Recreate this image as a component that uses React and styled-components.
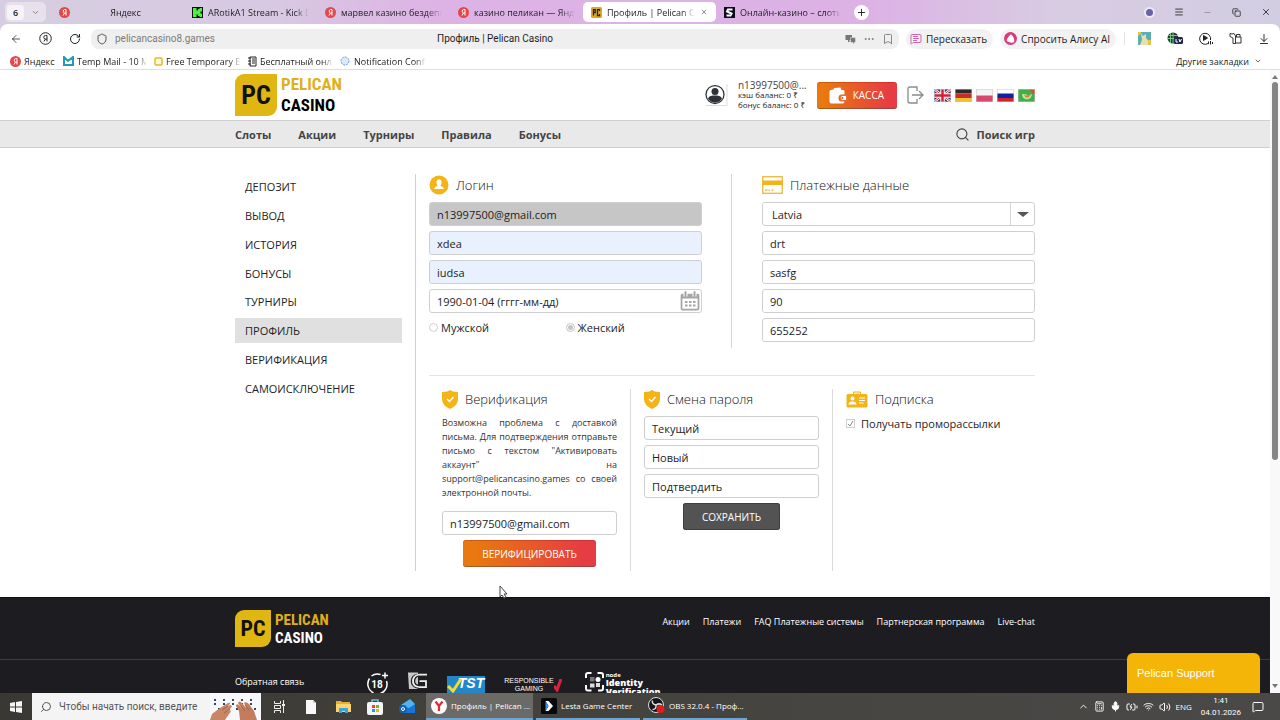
import React from "react";
import styled, { createGlobalStyle, css } from "styled-components";
import {
  ArrowLeft,
  BatteryCharging,
  Bookmark,
  Calculator,
  ChevronDown,
  ChevronUp,
  Copy,
  ArrowDownToLine,
  Ellipsis,
  Menu,
  MessageSquare,
  MessageSquareText,
  Mic,
  Minus,
  Plus,
  RotateCw,
  Search,
  Shield,
  Volume2,
  Wifi,
  X,
} from "lucide-react";

const GlobalStyle = createGlobalStyle`
  * {
    box-sizing: border-box;
  }

  body {
    margin: 0;
    font-family: "Open Sans", "Noto Sans", sans-serif;
    font-size: 11px;
    color: #1d1d1f;
    background: #fff;
  }

  a {
    color: inherit;
    text-decoration: none;
  }

  button,
  input,
  select {
    font: inherit;
    color: inherit;
  }

  button {
    border: none;
    padding: 0;
    background: none;
    cursor: pointer;
  }

  ul {
    list-style: none;
    margin: 0;
    padding: 0;
  }

  svg {
    display: block;
    flex: none;
  }
`;

const Screen = styled.div`
  height: 100vh;
  display: flex;
  flex-direction: column;
  overflow: hidden;
`;

/* ---------- browser ---------- */

const Browser = styled.header`
  flex: none;
  background: linear-gradient(90deg, #d6cee0 0%, #d8c8e2 22%, #ddb3e5 34%, #dcb2e5 68%, #d8cbe2 82%, #d2cee2 100%);
  border-bottom: 1px solid #dedede;
`;

const TabStrip = styled.div`
  height: 24px;
  display: flex;
  align-items: center;
  padding: 0 9px 0 5px;
`;

const TabCounter = styled.button`
  height: 20px;
  width: 41px;
  margin-right: 5px;
  display: flex;
  align-items: center;
  gap: 7px;
  padding: 0 4px 0 2px;
  border-radius: 5px;
  background: #e6e1ec;
  font-size: 9px;
  font-weight: 600;

  span {
    width: 17px;
    line-height: 15px;
    border-radius: 4px;
    background: #f6f3f8;
  }
`;

const Tab = styled.a`
  flex: 0 1 133px;
  min-width: 0;
  height: 20px;
  display: flex;
  align-items: center;
  gap: 5px;
  padding: 0 8px;
  border-radius: 5px;
  font-size: 9px;
  background: ${({ $active }) => ($active ? "#fff" : "transparent")};
`;

const TabTitle = styled.span`
  flex: 1;
  min-width: 0;
  overflow: hidden;
  white-space: nowrap;
  text-align: ${({ $center }) => ($center ? "center" : "left")};
  mask-image: linear-gradient(90deg, #000 85%, transparent 100%);
`;

const NewTab = styled.button`
  width: 15px;
  height: 15px;
  margin-left: 5px;
  display: grid;
  place-items: center;
  border-radius: 50%;
  background: #fff;
`;

const WindowButtons = styled.div`
  margin-left: auto;
  display: flex;
  align-items: center;
  gap: 18px;

  button {
    width: 11px;
    display: grid;
    place-items: center;
  }
`;

const Profile = styled.span`
  width: 11px;
  height: 11px;
  border: 2px solid #eceaf4;
  border-radius: 50%;
  background: #6a62a8;
`;

const Toolbar = styled.div`
  height: 29px;
  display: flex;
  align-items: center;
  gap: 7px;
  padding: 0 10px;
  background: #fff;
  border-radius: 8px 8px 0 0;
  font-size: 10px;
`;

const NavButtons = styled.div`
  display: flex;
  align-items: center;
  gap: 17px;
  margin-right: 3px;
`;

const Address = styled.div`
  flex: 1;
  min-width: 0;
  height: 20px;
  display: flex;
  align-items: center;
  padding: 0 5px;
  border-radius: 8px;
  background: #efefef;
  font-family: Roboto, "Open Sans", sans-serif;
`;

const AddressSide = styled.div`
  flex: 1;
  display: flex;
  align-items: center;
  justify-content: ${({ $end }) => ($end ? "flex-end" : "flex-start")};
  gap: 7px;
  color: #7b7b7b;
`;

const Chip = styled.button`
  height: 20px;
  display: flex;
  align-items: center;
  gap: 4px;
  padding: 0 6px 0 4px;
  border-radius: 10px;
  background: #f3f2f3;
`;

const Extensions = styled.div`
  display: flex;
  align-items: center;
  gap: 16px;
  margin-left: 1px;
  padding-left: 13px;
  border-left: 1px solid #e4e4e4;
`;

const Bookmarks = styled.nav`
  height: 16px;
  display: flex;
  align-items: center;
  gap: 7px;
  padding: 0 18px 0 10px;
  background: #fff;
  font-size: 9px;

  button {
    margin-left: auto;
    display: flex;
    align-items: center;
    gap: 5px;
  }
`;

const BookmarkLink = styled.a`
  flex: 0 1 ${({ $width }) => $width}px;
  min-width: 0;
  display: flex;
  align-items: center;
  gap: 3px;
`;

/* ---------- site ---------- */

const Viewport = styled.div`
  flex: 1;
  min-height: 0;
  display: flex;
  position: relative;
`;

const Site = styled.div`
  flex: 1;
  min-width: 0;
  overflow: hidden;
`;

const Container = styled.div`
  width: 100%;
  max-width: 800px;
  margin: 0 auto;
  display: flex;
  align-items: center;
`;

const SiteHeader = styled(Container)`
  height: 50px;
`;

const Logo = styled.a`
  display: flex;
  align-items: center;
  gap: 4px;
  font-family: "Liberation Sans Narrow", "Roboto Condensed", "Liberation Sans", sans-serif;
  font-weight: 700;
  font-size: ${({ $small }) => ($small ? 15 : 17)}px;
  line-height: ${({ $small }) => ($small ? 18 : 21)}px;
`;

const LogoMark = styled.span`
  width: ${({ $small }) => ($small ? 36 : 42)}px;
  line-height: ${({ $small }) => ($small ? 37 : 42)}px;
  border-radius: 9px 0;
  background: #e0b613;
  color: #111;
  text-align: center;
  font-size: ${({ $small }) => ($small ? 22 : 26)}px;
`;

const LogoText = styled.span`
  display: flex;
  flex-direction: column;
  color: ${({ $light }) => ($light ? "#fff" : "#000")};

  span {
    color: #e0b01a;
  }
`;

const Account = styled.div`
  margin-left: auto;
  display: flex;
  align-items: center;
  gap: 10px;
`;

const Balance = styled.div`
  min-width: 68px;
  font-size: 8px;
  line-height: 10px;
  white-space: nowrap;

  div:first-child {
    font-size: 10px;
    color: #444;
  }
`;

const Button = styled.button`
  height: 27px;
  display: inline-flex;
  align-items: center;
  justify-content: center;
  gap: 7px;
  padding: 0 19px;
  border-radius: 3px;
  color: #fff;
  font-size: 10px;
  white-space: nowrap;
  background: linear-gradient(90deg, #e8780f 10%, #e63c43 90%);
  box-shadow: inset 0 -1px 0 rgba(80, 60, 60, 0.45), inset 0 1px 0 rgba(160, 20, 20, 0.3);

  ${({ $dark }) =>
    $dark &&
    css`
      background: #545354;
      box-shadow: inset 0 0 0 1px #3f3f3f;
    `}
`;

const CashButton = styled(Button)`
  padding: 0 13px 0 12px;
  gap: 6px;
`;

const Flags = styled.div`
  display: flex;
  gap: 4px;
`;

const SiteNav = styled.nav`
  height: 28px;
  display: flex;
  border-top: 1px solid #cfcfcf;
  border-bottom: 1px solid #cfcfcf;
  background: #e9e9e9;
  color: #444;
  font-weight: 700;
`;

const NavInner = styled(Container)`
  gap: 27px;
`;

const SearchLink = styled.a`
  margin-left: auto;
  display: flex;
  align-items: center;
  gap: 7px;
`;

const Main = styled(Container)`
  align-items: stretch;
  gap: 13px;
  padding: 26px 0;
`;

const SideMenu = styled.ul`
  width: 167px;
  height: 227px;
  display: flex;
  flex-direction: column;
  justify-content: space-between;
`;

const SideLink = styled.a`
  display: block;
  padding: 0 10px;
  line-height: 25px;
  background: ${({ $active }) => ($active ? "#e0e0e0" : "transparent")};
`;

const Content = styled.main`
  flex: 1;
  min-width: 0;
  padding-left: 13px;
  border-left: 1px solid #cfcfcf;
`;

const TopForms = styled.div`
  display: grid;
  grid-template-columns: 1fr 1fr;
  padding-bottom: 27px;
  border-bottom: 1px solid #e2e2e2;
`;

const TopPanel = styled.section`
  padding-top: 1px;

  &:first-child {
    padding-right: 29px;
    border-right: 1px solid #d3d3d3;
  }

  &:last-child {
    padding-left: 30px;
    padding-bottom: 6px;
  }
`;

const BottomForms = styled.div`
  display: grid;
  grid-template-columns: repeat(3, 1fr);
  margin-top: 13px;
`;

const BottomPanel = styled.section`
  min-height: 182px;
  padding: 0 13px 4px;
  border-right: 1px solid #dadada;

  &:last-child {
    padding-right: 0;
    border-right: none;
  }
`;

const Heading = styled.h2`
  height: 20px;
  margin: 0 0 7px;
  display: flex;
  align-items: center;
  gap: 7px;
  font-size: 13px;
  font-weight: 300;
  color: #111;
`;

const Fields = styled.div`
  display: flex;
  flex-direction: column;
  gap: 5px;
`;

const fieldBox = css`
  width: 100%;
  height: 24px;
  padding: 0 7px;
  border: 1px solid #cfcfd2;
  border-radius: 3px;
  background: #fff;
  outline: none;
`;

const Field = styled.input`
  ${fieldBox}
  background: ${({ $tone }) => $tone || "#fff"};

  &::placeholder {
    color: #1d1d1f;
    opacity: 1;
  }
`;

const FieldWrap = styled.div`
  position: relative;

  svg {
    position: absolute;
    right: 2px;
    top: 2px;
    pointer-events: none;
  }
`;

const Country = styled.select`
  ${fieldBox}
  padding: 0 9px;
  appearance: none;
`;

const Arrow = styled.span`
  position: absolute;
  right: 1px;
  top: 1px;
  bottom: 1px;
  width: 24px;
  display: grid;
  place-items: center;
  border-left: 1px solid #d6d6d6;
  pointer-events: none;

  &::after {
    content: "";
    border: 6px solid transparent;
    border-top: 5px solid #555;
    border-bottom: 0;
  }
`;

const Genders = styled.div`
  margin-top: 7px;
  display: grid;
  grid-template-columns: 1fr 1fr;
`;

const Choice = styled.label`
  display: flex;
  align-items: center;
  gap: ${({ $wide }) => ($wide ? 6 : 3)}px;
  line-height: 15px;
  white-space: nowrap;

  input {
    appearance: none;
    flex: none;
    width: 9px;
    height: 9px;
    margin: 0;
    border: 1px solid #cfcfcf;
    background: #fff;
  }

  input[type="radio"] {
    border-radius: 50%;
  }

  input[type="radio"]:checked {
    background: #c4c4c4;
    box-shadow: inset 0 0 0 1px #fff;
  }
`;

const Tick = styled.span`
  position: relative;
  display: flex;

  svg {
    position: absolute;
    inset: 0;
    pointer-events: none;
  }

  input:not(:checked) + svg {
    display: none;
  }
`;

const Note = styled.p`
  margin: 0 0 11px;
  font-size: 9px;
  line-height: 14px;
  text-align: justify;
  color: #333;
`;

const Actions = styled.div`
  margin-top: 5px;
  display: flex;
  justify-content: center;
`;

const Footer = styled.footer`
  background: #1d1c20;
  border-top: 1px solid #111;
  color: #fff;
  font-size: 9px;
`;

const FooterTop = styled.div`
  border-bottom: 1px solid #3b3a3e;
  padding: 12px 0;
`;

const FooterLinks = styled.nav`
  align-self: flex-start;
  margin-left: auto;
  display: flex;
  gap: 13px;
  line-height: 24px;
`;

const FooterBottom = styled(Container)`
  padding: 12px 0 40px;
  align-items: flex-start;
  line-height: 20px;
`;

const Badges = styled.div`
  margin-left: 62px;
  display: flex;
  gap: 19px;
  align-items: flex-start;
`;

const Tst = styled.span`
  width: 38px;
  margin-top: 4px;
  display: flex;
  flex-direction: column;
  align-items: flex-end;
  padding: 0 1px;
  background: #2386c8;
  font: italic 700 14px/15px "Liberation Sans", sans-serif;
  position: relative;

  small {
    font: 6px/8px "Liberation Sans", sans-serif;
    color: #a5dcff;
  }

  svg {
    position: absolute;
    left: 0;
    top: 2px;
  }
`;

const Responsible = styled.span`
  display: flex;
  align-items: center;
  margin-top: 5px;
  font: 7px/8px "Liberation Sans", sans-serif;
  text-align: center;

  small {
    display: block;
    font-size: 7px;
    line-height: 8px;
  }
`;

const Identity = styled.span`
  display: flex;
  gap: 2px;
  margin-left: 4px;
  font-weight: 700;
  line-height: 9px;

  small {
    display: block;
    font-size: 6px;
    line-height: 6px;
  }

  b {
    display: block;
  }
`;

const ScrollTrack = styled.div`
  width: 10px;
  flex: none;
  display: flex;
  flex-direction: column;
  align-items: center;
  padding: 4px 0;
  background: #f9f9f9;
`;

const Thumb = styled.div`
  flex: 0 1 378px;
  width: 6px;
  margin: 3px 0 auto;
  border-radius: 3px;
  background: #858585;
`;

const Support = styled.button`
  position: absolute;
  right: 20px;
  bottom: 0;
  width: 133px;
  height: 40px;
  padding: 0 10px;
  border-radius: 6px 6px 0 0;
  background: #f4b408;
  color: #fff;
  font-family: "Liberation Sans", sans-serif;
  font-size: 11px;
  text-align: left;
`;

const Pointer = styled.svg`
  position: absolute;
  left: 499px;
  top: 515px;
`;

/* ---------- taskbar ---------- */

const Taskbar = styled.div`
  flex: none;
  height: 27px;
  display: flex;
  align-items: stretch;
  background: linear-gradient(90deg, #393833, #45433e 50%, #4b4948);
  color: #fff;
  font-size: 8px;
`;

const Start = styled.button`
  width: 32px;
  display: grid;
  place-items: center;
`;

const TaskSearch = styled.label`
  width: 229px;
  display: flex;
  align-items: center;
  gap: 7px;
  padding-left: 8px;
  background: #f4f4f4;
  color: #444;
  font-size: 10px;
  font-family: Roboto, "Open Sans", sans-serif;

  input {
    flex: 1;
    min-width: 0;
    padding: 0;
    border: none;
    background: none;
    outline: none;
  }

  input::placeholder {
    color: #555;
    opacity: 1;
  }
`;

const SearchGlyph = styled(Search)`
  transform: scaleX(-1);
`;

const Pinned = styled.div`
  display: flex;
  align-items: center;
  gap: 16px;
  padding: 0 11px 0 10px;

  button {
    width: 16px;
    display: grid;
    place-items: center;
  }
`;

const Task = styled.button`
  flex: 0 1 ${({ $active }) => ($active ? 107 : 104)}px;
  min-width: 0;
  margin-right: 3px;
  display: flex;
  align-items: center;
  gap: 4px;
  padding: 0 5px;
  border-bottom: 2px solid #6fa5d2;
  background: ${({ $active }) => ($active ? "#6c6a67" : "transparent")};
  white-space: nowrap;
`;

const Tray = styled.div`
  margin-left: auto;
  display: flex;
  align-items: center;
  gap: 5px;
  padding-right: 16px;
`;

const Clock = styled.div`
  margin: 0 6px 0 4px;
  font-family: Roboto, "Open Sans", sans-serif;
  line-height: 12px;
  text-align: center;
`;

/* ---------- icons ---------- */

const YandexIcon = ({ size = 11 }) => (
  <svg width={size} height={size} viewBox="0 0 22 22" aria-hidden="true">
    <circle cx="11" cy="11" r="11" fill="#e34848" />
    <path d="M14 17V5h-2.600a3.600 3.600 0 0 0-.4 7H14m-3 0-3 5" fill="none" stroke="#fff" strokeWidth="2" />
  </svg>
);

const KickIcon = () => (
  <svg width="11" height="11" viewBox="0 0 22 22" aria-hidden="true">
    <path d="M0 0h22v22H0z" fill="#111" />
    <path d="M2 2h7v5h3V4h3V2h5v7h-3v4h3v7h-5v-2h-3v-3H9v5H2z" fill="#4cf23d" />
  </svg>
);

const PelicanIcon = () => (
  <svg width="11" height="11" viewBox="0 0 22 22" aria-hidden="true">
    <rect width="22" height="22" rx="3" fill="#dca91c" />
    <path d="M5 17V5h3.500v6H5M17 8V5h-4v12h4v-3" fill="none" stroke="#222" strokeWidth="2.500" />
  </svg>
);

const SlotIcon = () => (
  <svg width="11" height="11" viewBox="0 0 22 22" aria-hidden="true">
    <path d="M0 0h22v22H0z" fill="#0b0b1c" />
    <path d="M17 5H8L6 9l9 4-2 4H5" fill="none" stroke="#fff" strokeWidth="4" />
  </svg>
);

const AvatarIcon = () => (
  <svg width="24" height="24" viewBox="0 0 48 48" aria-hidden="true">
    <path d="M46 2v43H4" fill="none" stroke="#ddd" strokeWidth="2" />
    <circle cx="22" cy="23" r="18" fill="#fff" stroke="#2d3138" strokeWidth="2.500" />
    <circle cx="22" cy="17" r="7" fill="#2d3138" />
    <path d="M8 31c3-6 8-6 14-6s11 0 14 6a16 16 0 0 1-28 0z" fill="#2d3138" />
  </svg>
);

const WalletIcon = () => (
  <svg width="18" height="17" viewBox="0 0 36 34" aria-hidden="true">
    <path d="M1 9q0-3 3-3l5-1 1-3 13-1 2 5h4q2 0 2 3v6h-6q-6 0-6 7t6 7h6q0 4-4 4H5q-4 0-4-4z" fill="#fff" />
    <path d="M25 17h10v10H25q-4-5 0-10z" fill="#fff" stroke="#e45a25" strokeWidth="1.500" />
    <circle cx="27" cy="22" r="2" fill="#e45a25" />
  </svg>
);

const LogoutIcon = () => (
  <svg width="17" height="18" viewBox="0 0 17 18" fill="none" stroke="#8b8b8b" strokeWidth="1.300" aria-hidden="true">
    <path d="M10 5V1H3Q1 1 1 3v12q0 2 2 2h7v-4M5 9h11M12 5l4 4-4 4" />
  </svg>
);

const UserIcon = () => (
  <svg width="20" height="20" viewBox="0 0 40 40" aria-hidden="true">
    <circle cx="20" cy="20" r="19" fill="#f2b416" />
    <ellipse cx="20" cy="15" rx="5" ry="6.500" fill="#fff" />
    <path d="M10 28q1-5 7-6v-3h6v3q6 1 7 6z" fill="#fff" />
  </svg>
);

const CardIcon = () => (
  <svg width="21" height="18" viewBox="0 0 42 36" aria-hidden="true">
    <rect x="1.500" y="1.500" width="39" height="33" fill="#fff" stroke="#e9b335" strokeWidth="2.500" />
    <path d="M1 9h40v9H1z" fill="#f2b416" />
    <path d="M6 28h5m2 0h3m3 0h4" stroke="#f2b416" strokeWidth="2.500" />
  </svg>
);

const ShieldIcon = () => (
  <svg width="16" height="19" viewBox="0 0 32 38" aria-hidden="true">
    <path d="M16 0q6 5 16 4v14q0 13-16 20Q0 31 0 18V4q10 1 16-4z" fill="#f2b416" />
    <path d="m10 18 5 5 8-9" fill="none" stroke="#fff" strokeWidth="3" />
  </svg>
);

const BadgeIcon = () => (
  <svg width="22" height="17" viewBox="0 0 44 34" aria-hidden="true">
    <path d="M4 6h10V3q0-2 2-2h12q2 0 2 2v3h10q3 0 3 3v21q0 3-3 3H4q-3 0-3-3V9q0-3 3-3z" fill="#f2b416" />
    <path d="M17 6V4h10v2M26 14h12M26 19h12M26 24h9" stroke="#fff" strokeWidth="2" fill="none" />
    <circle cx="13" cy="15" r="4" fill="#fff" />
    <path d="M5 27q0-6 8-6t8 6z" fill="#fff" />
  </svg>
);

const CalendarIcon = () => (
  <svg width="20" height="20" viewBox="0 0 40 40" aria-hidden="true">
    <rect x="3" y="7" width="34" height="30" rx="2" fill="#fff" stroke="#a5a5a5" strokeWidth="3.500" />
    <path d="M3 7h34v8H3z" fill="#a5a5a5" />
    <path d="M11 0v11M29 0v11" stroke="#fff" strokeWidth="8" />
    <path d="M11 2v8M29 2v8" stroke="#a5a5a5" strokeWidth="4" strokeLinecap="round" />
    <path d="M10 22h21M10 29h21" stroke="#a5a5a5" strokeWidth="4" strokeDasharray="5 3" />
  </svg>
);

const Flag = ({ code }) => (
  <svg width="17" height="13" viewBox="0 0 34 26" role="img" aria-label={code}>
    {code === "en" && (
      <>
        <path d="M0 0h34v26H0z" fill="#263c7c" />
        <path d="m0 0 34 26M34 0 0 26" stroke="#fff" strokeWidth="5" />
        <path d="m0 0 34 26M34 0 0 26" stroke="#cf3344" strokeWidth="2" />
        <path d="M17 0v26M0 13h34" stroke="#fff" strokeWidth="9" />
        <path d="M17 0v26M0 13h34" stroke="#cf2338" strokeWidth="5" />
      </>
    )}
    {code === "de" && (
      <>
        <path d="M0 0h34v9H0z" fill="#2c2b2b" />
        <path d="M0 9h34v9H0z" fill="#cc2b2b" />
        <path d="M0 18h34v8H0z" fill="#edc12d" />
      </>
    )}
    {code === "pl" && (
      <>
        <path d="M0 0h34v13H0z" fill="#f5f2f4" />
        <path d="M0 13h34v13H0z" fill="#d8486b" />
      </>
    )}
    {code === "ru" && (
      <>
        <path d="M0 0h34v9H0z" fill="#fff" />
        <path d="M0 9h34v9H0z" fill="#10239e" />
        <path d="M0 18h34v8H0z" fill="#cc2233" />
      </>
    )}
    {code === "pt" && (
      <>
        <path d="M0 0h34v26H0z" fill="#42ad4b" />
        <path d="M22 0h12v13z" fill="#e0492e" />
        <path d="M8 10q0 10 10 11 9-1 10-11l-8 4-4-4z" fill="#bde392" />
        <path d="M13 10q6 7 12-1-1 8-7 8-5 0-5-7z" fill="#e37a46" />
      </>
    )}
    <rect x=".5" y=".5" width="33" height="25" fill="none" stroke="#c9c5c9" />
  </svg>
);

const AgeBadge = () => (
  <svg width="23" height="24" viewBox="0 0 46 48" aria-label="18+">
    <path d="M29 5a20 20 0 0 0-18 3M7 13a20 20 0 0 0 8 29M26 44a20 20 0 0 0 15-26" fill="none" stroke="#fff" strokeWidth="3" />
    <path d="M38 1v12M32 7h12" stroke="#fff" strokeWidth="3" />
    <text x="22" y="31" textAnchor="middle" fill="#fff" fontFamily="Roboto, sans-serif" fontWeight="700" fontSize="20">18</text>
  </svg>
);

const GBadge = () => (
  <svg width="20" height="18" viewBox="0 0 40 36" aria-hidden="true">
    <path d="M0 1h20v33H2z" fill="#c8c7ca" />
    <path d="M38 5H20Q7 7 7 18t13 14h16V17H22M36 8H21q-8 2-8 10t8 9h9" fill="none" stroke="#222" strokeWidth="3" />
    <path d="M38 5H22q-12 2-12 13t12 12h14V18H23" fill="none" stroke="#eee" strokeWidth="3.500" />
  </svg>
);

const FaceFrame = () => (
  <svg width="19" height="20" viewBox="0 0 38 40" aria-hidden="true">
    <path d="M2 12V6q0-4 4-4h7M25 2h7q4 0 4 4v6M2 26v7q0 4 4 4h7M36 26v7q0 4-4 4h-6" fill="none" stroke="#fff" strokeWidth="4" />
    <path d="M10 10h9v9h-9z" fill="#777" />
    <circle cx="26" cy="15" r="5" fill="#fff" />
    <path d="M10 23h9v8h-9zM22 22h8v8h-8z" fill="#ddd" />
  </svg>
);

const HandsPicture = () => (
  <svg width="51" height="27" viewBox="0 0 51 27" aria-hidden="true">
    <path d="M0 0h51v27H0z" fill="#f7f8fb" />
    <path d="M4 7h44M4 11h44M8 16h40" stroke="#31456e" strokeWidth="2" strokeDasharray="2 7" />
    <path d="m0 27 2-6 8-6 8-5q3-1 2 1l-4 4 4-3q3 0 1 3l-4 3 3-1q2 1-1 4l-4 6z" fill="#c98564" />
    <path d="m30 27-1-9-3-5q0-3 3-1l4 5-5-7q1-3 4 0l5 6-3-6q2-2 5 1l5 7 3 9z" fill="#c37c5c" />
    <path d="m12 17 6-4M14 20l6-4M31 13l4 5M35 12l4 5" stroke="#a3644a" />
  </svg>
);

const WindowsIcon = () => (
  <svg width="12" height="12" viewBox="0 0 12 12" fill="#f6f6f6" aria-hidden="true">
    <path d="m0 2 5-1v4.600H0zM6 1l6-1v5.600H6zM0 6.500h5V11l-5-1zM6 6.500h6V12l-6-1z" />
  </svg>
);

const TaskViewIcon = () => (
  <svg width="13" height="13" viewBox="0 0 13 13" fill="none" stroke="#eee" aria-hidden="true">
    <path d="M1.500 1v2.500h6V1M1.500 5.500h6v3h-6zM1.500 13v-2.500h6V13M10.500 0v13" />
    <path d="M9 4h3v2H9z" fill="#eee" stroke="none" />
  </svg>
);

const FileIcon = () => (
  <svg width="12" height="14" viewBox="0 0 12 14" aria-hidden="true">
    <path d="M1 0h7l3 3v11H1z" fill="#f8f8f8" />
    <path d="M8 0v3h3" fill="#ccc" />
  </svg>
);

const FolderIcon = () => (
  <svg width="15" height="13" viewBox="0 0 15 13" aria-hidden="true">
    <path d="M0 1h5l1 1h8v4H0z" fill="#e9ad35" />
    <path d="M0 4h15v8H0z" fill="#f9d570" />
    <path d="M3 13V8h9v5h-3v-2H6v2z" fill="#3da5d8" />
  </svg>
);

const StoreIcon = () => (
  <svg width="16" height="16" viewBox="0 0 16 16" aria-hidden="true">
    <path d="M5 4V1h6v3" fill="none" stroke="#63c1e8" strokeWidth="1.500" />
    <rect y="3" width="16" height="13" rx="2" fill="#f4f5f5" />
    <path d="M5 6h3v3H5z" fill="#e5472d" />
    <path d="M9 6h3v3H9z" fill="#74b530" />
    <path d="M5 10h3v3H5z" fill="#209de0" />
    <path d="M9 10h3v3H9z" fill="#eeb321" />
  </svg>
);

const MailIcon = () => (
  <svg width="16" height="15" viewBox="0 0 16 15" aria-hidden="true">
    <path d="m2 6 9-6 5 5v8H4z" fill="#50b4f4" />
    <path d="m2 6 8 3 6-4v9H2z" fill="#1675d6" />
    <circle cx="4" cy="10" r="4" fill="#1260b5" />
    <circle cx="4" cy="10" r="1.500" fill="none" stroke="#fff" />
  </svg>
);

const YBrowserIcon = () => (
  <svg width="16" height="16" viewBox="0 0 32 32" aria-hidden="true">
    <circle cx="16" cy="16" r="16" fill="#fff" />
    <path d="m9 7 7 9 7-9M16 15v11" fill="none" stroke="#e52b32" strokeWidth="4.500" />
  </svg>
);

const LestaIcon = () => (
  <svg width="16" height="16" viewBox="0 0 32 32" aria-hidden="true">
    <rect width="32" height="32" rx="3" fill="#08090c" />
    <path d="M9 6h6l9 10-9 10H9l6-10z" fill="#fff" />
    <path d="m9 6 6 10-6 10" fill="#3f8cea" />
  </svg>
);

const ObsIcon = () => (
  <svg width="17" height="17" viewBox="0 0 34 34" aria-hidden="true">
    <circle cx="16" cy="16" r="15" fill="#17161a" stroke="#ddd" strokeWidth="2" />
    <path d="M16 16q-9-2-7-9M16 16q8-5 12 1M16 16q1 9-7 9" fill="none" stroke="#ddd" strokeWidth="3" />
    <circle cx="25" cy="24" r="8" fill="#e01e1e" />
  </svg>
);

/* ---------- data ---------- */

const tabs = [
  { title: "Яндекс", icon: <YandexIcon />, center: true },
  { title: "ARotikA1 Stream - Kick Da", icon: <KickIcon /> },
  { title: "марвел казино бездепоз", icon: <YandexIcon /> },
  { title: "казино пеликан — Яндекс", icon: <YandexIcon /> },
  { title: "Профиль | Pelican Casin", icon: <PelicanIcon />, active: true },
  { title: "Онлайн-казино – слоты, с", icon: <SlotIcon /> },
];

const menu = ["Депозит", "Вывод", "История", "Бонусы", "Турниры", "Профиль", "Верификация", "Самоисключение"];

const App = () => {
  return (
    <>
      <GlobalStyle />
      <Screen>
        <Browser>
          <TabStrip>
            <TabCounter aria-label="Вкладки">
              <span>6</span>
              <ChevronDown size={9} color="#666" />
            </TabCounter>
            {tabs.map((tab) => (
              <Tab href="#" key={tab.title} $active={tab.active}>
                {tab.icon}
                <TabTitle $center={tab.center}>{tab.title}</TabTitle>
                {tab.active && <X size={8} color="#555" />}
              </Tab>
            ))}
            <NewTab aria-label="Новая вкладка">
              <Plus size={11} />
            </NewTab>
            <WindowButtons>
              <Profile />
              <button aria-label="Меню"><Menu size={10} /></button>
              <button aria-label="Свернуть"><Minus size={9} color="#888" /></button>
              <button aria-label="Развернуть"><Copy size={9} /></button>
              <button aria-label="Закрыть"><X size={10} /></button>
            </WindowButtons>
          </TabStrip>
          <Toolbar>
            <NavButtons>
              <button aria-label="Назад"><ArrowLeft size={12} strokeWidth={1.5} /></button>
              <button aria-label="Главная">
                <svg width="13" height="13" viewBox="0 0 26 26" fill="none" stroke="#222" strokeWidth="2">
                  <circle cx="13" cy="13" r="11.500" />
                  <path d="M16 19V7h-3a3 3 0 0 0 0 7h3m-3 0-3 5" />
                </svg>
              </button>
              <button aria-label="Обновить"><RotateCw size={12} strokeWidth={2} /></button>
            </NavButtons>
            <Address>
              <AddressSide>
                <Shield size={12} strokeWidth={1.8} color="#444" />
                <span>pelicancasino8.games</span>
              </AddressSide>
              <span>Профиль | Pelican Casino</span>
              <AddressSide $end>
                <svg width="11" height="10" viewBox="0 0 22 20" fill="#777" aria-hidden="true">
                  <path d="M1 2h13v10H9v4H6v-4H1z" />
                  <path d="M11 7h10v10h-3v3h-2v-3h-5z" stroke="#efefef" />
                </svg>
                <Ellipsis size={12} />
                <Bookmark size={12} strokeWidth={1.8} />
              </AddressSide>
            </Address>
            <Chip>
              <MessageSquareText size={12} color="#c957a9" strokeWidth={1.8} />
              Пересказать
            </Chip>
            <Chip>
              <svg width="13" height="13" viewBox="0 0 26 26" aria-hidden="true">
                <circle cx="13" cy="13" r="13" fill="#d93a78" />
                <path d="M13 5q4 0 7 9t-7 7-7-7 7-9z" fill="#fff" />
              </svg>
              Спросить Алису AI
            </Chip>
            <Extensions>
              <svg width="13" height="13" viewBox="0 0 13 13" aria-hidden="true">
                <path d="M0 0h13v13H0z" fill="#5aafb3" />
                <path d="m3 1 2 3 3-2v4q3 2 2 7H2l2-5z" fill="#e9dfae" />
                <path d="M0 0h3v2L0 4zM10 8h3v5h-3z" fill="#e2c54e" />
              </svg>
              <svg width="16" height="13" viewBox="0 0 32 26" aria-hidden="true">
                <circle cx="12" cy="12" r="11" fill="#243b35" />
                <path d="M3 7h19M1 13h21M12 1v22M7 2v20" stroke="#76c783" strokeWidth="2" />
                <rect x="14" y="10" width="18" height="14" rx="3" fill="#23264b" />
                <path d="M18 14v6h4M24 14l2 6 3-6" stroke="#fff" strokeWidth="2" fill="none" />
              </svg>
              <svg width="14" height="13" viewBox="0 0 28 26" fill="none" stroke="#222" strokeWidth="2" aria-hidden="true">
                <path d="M18 23a11 11 0 1 1 5-7M19 19v5M23 18v7M27 20v4" />
                <path d="m9 7 8 5-8 5z" fill="#222" />
              </svg>
              <svg width="13" height="13" viewBox="0 0 26 26" fill="none" stroke="#333" strokeWidth="2" aria-hidden="true">
                <path d="M2 3q4 2 8 0l3 5v15H8V12L2 9zM13 10h11v12H13M15 10V5h7v5" />
              </svg>
              <ArrowDownToLine size={12} strokeWidth={1.8} />
            </Extensions>
          </Toolbar>
          <Bookmarks>
            <BookmarkLink href="#" $width={46}>
              <YandexIcon />
              <span>Яндекс</span>
            </BookmarkLink>
            <BookmarkLink href="#" $width={84}>
              <svg width="11" height="10" viewBox="0 0 11 10" fill="none" stroke="#2599b8" strokeWidth="2" aria-hidden="true">
                <path d="M1 8V1l4 4 5-4v7M0 9h11" />
              </svg>
              <TabTitle>Temp Mail - 10 Min</TabTitle>
            </BookmarkLink>
            <BookmarkLink href="#" $width={87}>
              <svg width="9" height="9" viewBox="0 0 9 9" aria-hidden="true">
                <rect x="1" y="1" width="7" height="7" rx="1" fill="#fff9db" stroke="#e7b928" strokeWidth="1.500" />
              </svg>
              <TabTitle>Free Temporary Er</TabTitle>
            </BookmarkLink>
            <BookmarkLink href="#" $width={85}>
              <svg width="9" height="11" viewBox="0 0 9 11" fill="none" stroke="#222" aria-hidden="true">
                <path d="M2 1h6v9H2zM0 2h3M0 5h3M0 8h3M4 3h3M4 5h3M4 7h3" />
              </svg>
              <TabTitle>Бесплатный онла</TabTitle>
            </BookmarkLink>
            <BookmarkLink href="#" $width={86}>
              <svg width="11" height="10" viewBox="0 0 11 10" aria-hidden="true">
                <circle cx="5" cy="5" r="4" fill="#dceaff" stroke="#7197dc" strokeDasharray="2 1" />
              </svg>
              <TabTitle>Notification Confir</TabTitle>
            </BookmarkLink>
            <button>
              Другие закладки
              <ChevronDown size={8} />
            </button>
          </Bookmarks>
        </Browser>

        <Viewport>
          <Site>
            <SiteHeader>
              <Logo href="#">
                <LogoMark>PC</LogoMark>
                <LogoText>
                  <span>PELICAN</span>
                  CASINO
                </LogoText>
              </Logo>
              <Account>
                <AvatarIcon />
                <Balance>
                  <div>n13997500@...</div>
                  <div>кэш баланс: 0 ₹</div>
                  <div>бонус баланс: 0 ₹</div>
                </Balance>
                <CashButton>
                  <WalletIcon />
                  КАССА
                </CashButton>
                <button aria-label="Выйти"><LogoutIcon /></button>
                <Flags>
                  {["en", "de", "pl", "ru", "pt"].map((code) => (
                    <Flag key={code} code={code} />
                  ))}
                </Flags>
              </Account>
            </SiteHeader>

            <SiteNav>
              <NavInner>
                <a href="#">Слоты</a>
                <a href="#">Акции</a>
                <a href="#">Турниры</a>
                <a href="#">Правила</a>
                <a href="#">Бонусы</a>
                <SearchLink href="#">
                  <Search size={15} strokeWidth={1.8} />
                  Поиск игр
                </SearchLink>
              </NavInner>
            </SiteNav>

            <Main>
              <SideMenu>
                {menu.map((item) => (
                  <li key={item}>
                    <SideLink href="#" $active={item === "Профиль"}>{item.toUpperCase()}</SideLink>
                  </li>
                ))}
              </SideMenu>

              <Content>
                <TopForms>
                  <TopPanel>
                    <Heading><UserIcon />Логин</Heading>
                    <Fields>
                      <Field aria-label="Email" defaultValue="n13997500@gmail.com" readOnly $tone="#c6c6c6" />
                      <Field aria-label="Имя" defaultValue="xdea" $tone="#e8f1fd" />
                      <Field aria-label="Фамилия" defaultValue="iudsa" $tone="#e8f1fd" />
                      <FieldWrap>
                        <Field aria-label="Дата рождения" defaultValue="1990-01-04 (гггг-мм-дд)" />
                        <CalendarIcon />
                      </FieldWrap>
                    </Fields>
                    <Genders>
                      <Choice><input type="radio" name="gender" />Мужской</Choice>
                      <Choice><input type="radio" name="gender" defaultChecked />Женский</Choice>
                    </Genders>
                  </TopPanel>
                  <TopPanel>
                    <Heading><CardIcon />Платежные данные</Heading>
                    <Fields>
                      <FieldWrap>
                        <Country aria-label="Страна"><option>Latvia</option></Country>
                        <Arrow />
                      </FieldWrap>
                      <Field aria-label="Город" defaultValue="drt" />
                      <Field aria-label="Улица" defaultValue="sasfg" />
                      <Field aria-label="Индекс" defaultValue="90" />
                      <Field aria-label="Телефон" defaultValue="655252" />
                    </Fields>
                  </TopPanel>
                </TopForms>

                <BottomForms>
                  <BottomPanel>
                    <Heading><ShieldIcon />Верификация</Heading>
                    <Note>
                      Возможна проблема с доставкой письма. Для подтверждения отправьте письмо с
                      текстом "Активировать аккаунт" на support@pelicancasino.games со своей электронной почты.
                    </Note>
                    <Field aria-label="Email для верификации" defaultValue="n13997500@gmail.com" />
                    <Actions><Button>ВЕРИФИЦИРОВАТЬ</Button></Actions>
                  </BottomPanel>
                  <BottomPanel>
                    <Heading><ShieldIcon />Смена пароля</Heading>
                    <Fields>
                      <Field type="password" aria-label="Текущий" placeholder="Текущий" />
                      <Field type="password" aria-label="Новый" placeholder="Новый" />
                      <Field type="password" aria-label="Подтвердить" placeholder="Подтвердить" />
                    </Fields>
                    <Actions><Button $dark>СОХРАНИТЬ</Button></Actions>
                  </BottomPanel>
                  <BottomPanel>
                    <Heading><BadgeIcon />Подписка</Heading>
                    <Choice $wide>
                      <Tick>
                        <input type="checkbox" defaultChecked />
                        <svg width="9" height="9" viewBox="0 0 9 9" aria-hidden="true">
                          <path d="m2 5 2 2 3-5" fill="none" stroke="#888" />
                        </svg>
                      </Tick>
                      Получать проморассылки
                    </Choice>
                  </BottomPanel>
                </BottomForms>
              </Content>
            </Main>

            <Footer>
              <FooterTop>
                <Container>
                  <Logo href="#" $small>
                    <LogoMark $small>PC</LogoMark>
                    <LogoText $light>
                      <span>PELICAN</span>
                      CASINO
                    </LogoText>
                  </Logo>
                  <FooterLinks>
                    <a href="#">Акции</a>
                    <a href="#">Платежи</a>
                    <a href="#">FAQ Платежные системы</a>
                    <a href="#">Партнерская программа</a>
                    <a href="#">Live-chat</a>
                  </FooterLinks>
                </Container>
              </FooterTop>
              <FooterBottom>
                <a href="#">Обратная связь</a>
                <Badges>
                  <AgeBadge />
                  <GBadge />
                  <Tst>
                    TST
                    <small>VERIFIED</small>
                    <svg width="16" height="16" viewBox="0 0 16 16" fill="none" stroke="#f3dc2c" strokeWidth="3" aria-hidden="true">
                      <path d="m1 8 5 5 8-12" />
                    </svg>
                  </Tst>
                  <Responsible>
                    <span>RESPONSIBLE<small>GAMING</small></span>
                    <svg width="8" height="13" viewBox="0 0 8 13" fill="none" stroke="#dc2040" strokeWidth="3" aria-hidden="true">
                      <path d="m0 7 3 4 4-11" />
                    </svg>
                  </Responsible>
                  <Identity>
                    <FaceFrame />
                    <span>
                      <small>node</small>
                      <b>Identity</b>
                      <b>Verification</b>
                    </span>
                  </Identity>
                </Badges>
              </FooterBottom>
            </Footer>
          </Site>

          <ScrollTrack aria-hidden="true">
            <svg width="6" height="5" viewBox="0 0 6 5"><path d="m0 5 3-4 3 4z" fill="#777" /></svg>
            <Thumb />
            <svg width="6" height="5" viewBox="0 0 6 5"><path d="m0 0 3 4 3-4z" fill="#777" /></svg>
          </ScrollTrack>
          <Support>Pelican Support</Support>
          <Pointer width="9" height="14" viewBox="0 0 9 14" aria-hidden="true">
            <path d="M1 1v11l2-2 2 3 2-1-2-3h3z" fill="#fff" stroke="#444" />
          </Pointer>
        </Viewport>

        <Taskbar>
          <Start aria-label="Пуск"><WindowsIcon /></Start>
          <TaskSearch>
            <SearchGlyph size={12} strokeWidth={1.8} />
            <input aria-label="Поиск" placeholder="Чтобы начать поиск, введите" />
            <HandsPicture />
          </TaskSearch>
          <Pinned>
            <button aria-label="Представление задач"><TaskViewIcon /></button>
            <button aria-label="Документ"><FileIcon /></button>
            <button aria-label="Проводник"><FolderIcon /></button>
            <button aria-label="Магазин"><StoreIcon /></button>
            <button aria-label="Почта"><MailIcon /></button>
          </Pinned>
          <Task $active><YBrowserIcon />Профиль | Pelican ...</Task>
          <Task><LestaIcon />Lesta Game Center</Task>
          <Task><ObsIcon />OBS 32.0.4 - Проф...</Task>
          <Tray>
            <ChevronUp size={11} />
            <Calculator size={11} />
            <Mic size={11} fill="#fff" />
            <BatteryCharging size={12} />
            <Wifi size={11} />
            <Volume2 size={12} />
            <span>ENG</span>
            <Clock>
              <div>1:41</div>
              <div>04.01.2026</div>
            </Clock>
            <MessageSquare size={12} />
          </Tray>
        </Taskbar>
      </Screen>
    </>
  );
};

export default App;
